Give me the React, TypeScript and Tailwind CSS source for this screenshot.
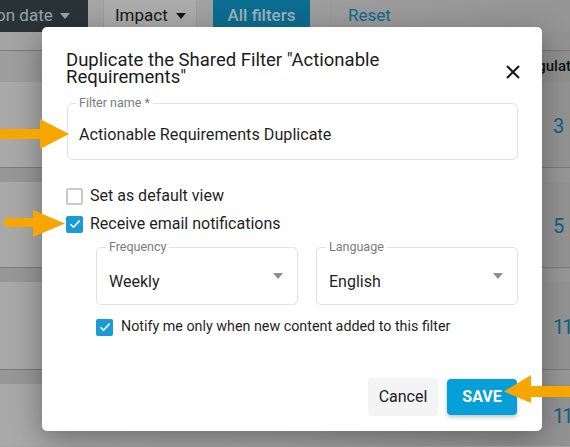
import React from "react";

const font = "font-['Roboto','Liberation_Sans',sans-serif]";

function Caret({ className }: { className?: string }) {
  return (
    <svg width="10" height="6" viewBox="0 0 10 6" className={className}>
      <path d="M0 0h10L5 6z" fill="currentColor" />
    </svg>
  );
}

function Check({ checked, size = 17 }: { checked?: boolean; size?: number }) {
  if (!checked) {
    return (
      <span
        className="shrink-0 rounded-[2px] border-2 border-[#c9c9c9] bg-white"
        style={{ width: size, height: size }}
      />
    );
  }
  return (
    <span
      className="flex shrink-0 items-center justify-center rounded-[2px] bg-[#1a9bd7]"
      style={{ width: size, height: size }}
    >
      <svg width="12" height="10" viewBox="0 0 12 10">
        <path d="M1.5 5.2 4.6 8.2 10.6 1.6" fill="none" stroke="#fff" strokeWidth="1.6" />
      </svg>
    </span>
  );
}

function SelectBox({ label, value }: { label: string; value: string }) {
  return (
    <div className="relative h-[58px] flex-1 rounded-[5px] border border-[#e2e2e2]">
      <span className="absolute -top-[8px] left-[9px] bg-white px-[3px] text-[12.5px] leading-[14px] text-[#7b7b7b]">
        {label}
      </span>
      <div className="flex h-full items-center justify-between pl-[12px] pr-[14px] pt-[12px]">
        <span className="text-[16px] text-[#1f1f1f]">{value}</span>
        <Caret className="-mt-[12px] text-[#8d8d8d]" />
      </div>
    </div>
  );
}

// background table rows behind the modal
function Row({ value, height, band = true }: { value: string; height: number; band?: boolean }) {
  return (
    <div>
      {band && <div className="h-[15px] border-t border-[#7c7c7c] bg-[#979797]" />}
      <div
        className="flex items-center justify-end bg-gradient-to-r from-[#a9a9a9] via-[#a3a3a3] to-[#939393]"
        style={{ height }}
      >
        <span className="mt-[2px] w-[17px] whitespace-nowrap text-[20px] tracking-[-2px] text-[#0c6187]">
          {value}
        </span>
      </div>
    </div>
  );
}

export default function App() {
  return (
    <div className={`relative h-[447px] w-[570px] overflow-hidden bg-[#a3a3a3] ${font}`}>
      {/* toolbar */}
      <div className="flex h-[32px] items-stretch bg-gradient-to-r from-[#a8a8a8] to-[#959595] text-[17px]">
        <div className="flex w-[88px] items-center gap-[7px] bg-[#2a3338] text-[#9ba5aa]">
          <span className="-ml-[4px] whitespace-nowrap">on date</span>
          <Caret />
        </div>
        <div className="ml-[15px] flex w-[94px] items-center gap-[8px] border-x border-[#9d9d9d] bg-[#ababab] pl-[11px] text-[#151515]">
          <span>Impact</span>
          <Caret />
        </div>
        <div className="ml-[16px] flex w-[97px] items-center justify-center bg-[#0b6d90] font-medium text-[#9db3bb]">
          All filters
        </div>
        <div className="ml-[20px] flex items-center border-l border-[#9a9a9a] pl-[17px] text-[#0c6a8e]">
          Reset
        </div>
      </div>

      {/* table */}
      <div className="h-[18px] bg-gradient-to-r from-[#a4a4a4] to-[#929292]" />
      <div className="flex h-[32px] items-center justify-end border-t border-[#7c7c7c] bg-gradient-to-r from-[#9e9e9e] to-[#8f8f8f]">
        <span className="-mr-[1px] text-[15px] font-medium text-[#111]">Regulat</span>
      </div>
      <Row value="3" height={85} band={false} />
      <Row value="5" height={85} />
      <Row value="11" height={87} />
      <Row value="11" height={62} />

      {/* modal */}
      <div className="absolute left-[42px] top-[27px] flex h-[404px] w-[500px] flex-col rounded-[5px] bg-white px-[24px] pb-[15px] pt-[25px] shadow-[0_8px_30px_rgba(0,0,0,0.35)]">
        <div className="flex items-start justify-between">
          <h2 className="w-[410px] text-[18.5px] leading-[16.5px] text-[#1c1c1c]">
            Duplicate the Shared Filter "Actionable Requirements"
          </h2>
          <svg width="16" height="16" viewBox="0 0 16 16" className="-mr-[3px] mt-[12px]">
            <path d="M2 2 14 14M14 2 2 14" stroke="#1a1a1a" strokeWidth="2.2" />
          </svg>
        </div>

        <div className="relative ml-[1px] mt-[18px] h-[57px] rounded-[6px] border border-[#e2e2e2]">
          <span className="absolute -top-[8px] left-[8px] bg-white px-[3px] text-[12.5px] leading-[14px] text-[#7b7b7b]">
            Filter name *
          </span>
          <div className="flex h-full items-center pl-[11px] pt-[7px] text-[16.2px] text-[#1f1f1f]">
            Actionable Requirements Duplicate
          </div>
        </div>

        <label className="mt-[24px] flex h-[24px] items-center gap-[7px] text-[16px] text-[#1f1f1f]">
          <Check />
          Set as default view
        </label>
        <label className="mt-[4px] flex h-[24px] items-center gap-[7px] text-[16px] text-[#1f1f1f]">
          <Check checked />
          Receive email notifications
        </label>

        <div className="ml-[30px] mt-[11px] flex gap-[18px]">
          <SelectBox label="Frequency" value="Weekly" />
          <SelectBox label="Language" value="English" />
        </div>

        <label className="ml-[30px] mt-[10px] flex h-[24px] items-center gap-[8px] text-[14.3px] text-[#1f1f1f]">
          <Check checked />
          Notify me only when new content added to this filter
        </label>

        <div className="mt-auto flex justify-end gap-[9px] pr-[1px]">
          <button className="h-[38px] w-[70px] rounded-[4px] bg-[#f4f4f4] text-[16px] text-[#222]">
            Cancel
          </button>
          <button className="mt-[1px] h-[36px] w-[70px] rounded-[4px] bg-[#069fd8] text-[16px] font-bold text-white shadow-[0_2px_4px_rgba(0,0,0,0.25)]">
            SAVE
          </button>
        </div>
      </div>

      {/* orange callout arrows */}
      <svg className="absolute left-0 top-0" width="570" height="447" viewBox="0 0 570 447">
        <g fill="#f7a600">
          <path d="M0 129H40V119L69 134 40 149V139H0Z" />
          <path d="M8 218H33V210L65 223.5 33 237V227H8A4.5 4.5 0 0 1 8 218Z" />
          <path d="M570 386H531V375L504 391.5 531 403V397H570Z" />
        </g>
      </svg>
    </div>
  );
}
